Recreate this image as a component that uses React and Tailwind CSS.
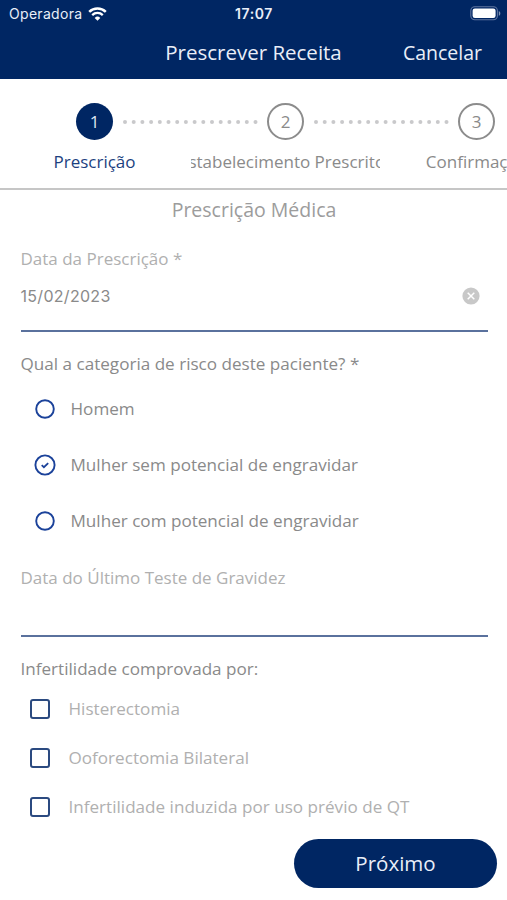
import { useState } from "react";

const steps = ["Prescrição", "Estabelecimento Prescritor", "Confirmação"];

const riskOptions = [
  { id: "homem", label: "Homem" },
  { id: "sem", label: "Mulher sem potencial de engravidar" },
  { id: "com", label: "Mulher com potencial de engravidar" },
];

const infertilityOptions = ["Histerectomia", "Ooforectomia Bilateral", "Infertilidade induzida por uso prévio de QT"];

function WifiIcon() {
  return (
    <svg width="19" height="14" viewBox="0 0 19 14" fill="none">
      <path d="M1.2 4.9a11.9 11.9 0 0 1 16.6 0" stroke="#fff" strokeWidth="2.5" />
      <path d="M4.2 8.1a7.6 7.6 0 0 1 10.6 0" stroke="#fff" strokeWidth="2.3" />
      <path d="M9.5 13.8 6.7 10.9a4 4 0 0 1 5.6 0z" fill="#fff" />
    </svg>
  );
}

function BatteryIcon() {
  return (
    <svg width="31" height="15" viewBox="0 0 31 15" fill="none">
      <rect x="0.8" y="0.8" width="26.6" height="13" rx="4" stroke="#5f76a0" strokeWidth="1.1" />
      <rect x="2.6" y="2.5" width="23" height="9.6" rx="2.3" fill="#fff" />
      <path d="M28.8 5v4.8c1-.4 1.5-1.3 1.5-2.4S29.8 5.4 28.8 5z" fill="#8093b3" />
    </svg>
  );
}

function Radio({ checked }) {
  return (
    <svg width="22" height="22" viewBox="0 0 22 22" fill="none" stroke="#1b429a">
      <circle cx="11" cy="11" r={checked ? 9.6 : 8.8} strokeWidth="1.9" />
      {checked && <path d="M7.7 11.2l2.2 2 4.3-4.1" strokeWidth="1.8" />}
    </svg>
  );
}

function Dots() {
  return (
    <svg width="154" height="6" viewBox="0 0 154 6" fill="#c9c9cb">
      {Array.from({ length: 16 }, (_, i) => (
        <circle key={i} cx={12 + i * 8.7} cy="3" r="2" />
      ))}
    </svg>
  );
}

export default function App() {
  const [risk, setRisk] = useState("sem");
  const [date, setDate] = useState("15/02/2023");

  return (
    <div className="w-[507px] h-[900px] overflow-hidden bg-white font-['Open_Sans',sans-serif] text-[#8a8a8a]">
      {/* Cabeçalho */}
      <header className="h-[79px] bg-[#002663] text-[#e9eef8]">
        <div className="h-[27px] grid grid-cols-3 items-center pl-[9px] pr-[6px] font-['Inter',sans-serif] text-[14px]">
          <div className="flex items-center gap-[6px]">
            <span className="tracking-[0.3px]">Operadora</span>
            <WifiIcon />
          </div>
          <span className="text-center font-semibold tracking-[0.6px] -ml-[2px]">17:07</span>
          <div className="flex justify-end">
            <BatteryIcon />
          </div>
        </div>
        <div className="h-[51px] grid grid-cols-[1fr_auto_1fr] items-center">
          <span />
          <h1 className="text-[20.5px]">Prescrever Receita</h1>
          <button className="justify-self-end pr-[25px] text-[19.5px]">Cancelar</button>
        </div>
      </header>

      {/* Etapas */}
      <nav className="h-[111px] border-b-2 border-[#c6c6c6] pt-[24px] overflow-hidden">
        <div className="flex items-center w-[600px] pl-[76px] text-[17px]">
          <span className="size-[37px] shrink-0 rounded-full bg-[#002663] text-[#dfe6f3] flex items-center justify-center">1</span>
          <Dots />
          <span className="size-[37px] shrink-0 rounded-full border-[2.5px] border-[#8c8c8c] flex items-center justify-center">2</span>
          <Dots />
          <span className="size-[37px] shrink-0 rounded-full border-[2.5px] border-[#8c8c8c] flex items-center justify-center">3</span>
        </div>
        <div className="flex w-[600px] pt-[9px] gap-[2px] text-[17px]">
          {steps.map((step, i) => (
            <div key={step} className="w-[189px] shrink-0 overflow-hidden flex justify-center">
              <span className={i === 0 ? "whitespace-nowrap text-[#1c3f80]" : "whitespace-nowrap"}>{step}</span>
            </div>
          ))}
        </div>
      </nav>

      <main className="pl-[20.5px] pr-[19.5px] text-[17px]">
        <h2 className="h-[39px] flex items-center justify-center text-[19.5px] text-[#9c9c9c]">Prescrição Médica</h2>

        <section className="h-[103px] border-b-2 border-[#5a719d] pt-[17px]">
          <label className="block leading-[26px] text-[#b0b0b0]">Data da Prescrição *</label>
          <div className="flex items-center justify-between mt-[11px] pr-[8px] leading-[26px]">
            <span className="font-['Inter',sans-serif] text-[16px] tracking-[0.3px]">{date}</span>
            <button onClick={() => setDate("")}>
              <svg width="18" height="18" viewBox="0 0 18 18">
                <circle cx="9" cy="9" r="8.6" fill="#c8c8c8" />
                <path d="M5.7 5.7l6.6 6.6M12.3 5.7l-6.6 6.6" stroke="#fff" strokeWidth="1.5" />
              </svg>
            </button>
          </div>
        </section>

        {/* Categoria de risco */}
        <p className="mt-[18.5px] leading-[26px] text-[17.1px]">Qual a categoria de risco deste paciente? *</p>
        <div className="mt-[4px] text-[17.1px]">
          {riskOptions.map((option) => (
            <button key={option.id} onClick={() => setRisk(option.id)} className="h-[56px] flex items-center gap-[14.500px] pl-[13.500px]">
              <Radio checked={risk === option.id} />
              <span>{option.label}</span>
            </button>
          ))}
        </div>

        <section className="h-[88px] border-b-2 border-[#5a719d] pt-[16.500px]">
          <label className="block leading-[26px] text-[#b0b0b0]">Data do Último Teste de Gravidez</label>
        </section>

        <p className="mt-[19px] leading-[26px] text-[17.1px]">Infertilidade comprovada por:</p>
        <div className="mt-[3px] text-[17.1px] text-[#b0b0b0]">
          {infertilityOptions.map((label) => (
            <div key={label} className="h-[49px] flex items-center gap-[18.500px] pl-[9.500px]">
              <span className="size-[20px] rounded-[3px] border-2 border-[#2b4a80]" />
              <span>{label}</span>
            </div>
          ))}
        </div>

        <div className="flex justify-end -mr-[9.500px] mt-[7px]">
          <button className="w-[203px] h-[49px] rounded-full bg-[#002663] text-[#e9eef8] text-[20.5px]">Próximo</button>
        </div>
      </main>
    </div>
  );
}
